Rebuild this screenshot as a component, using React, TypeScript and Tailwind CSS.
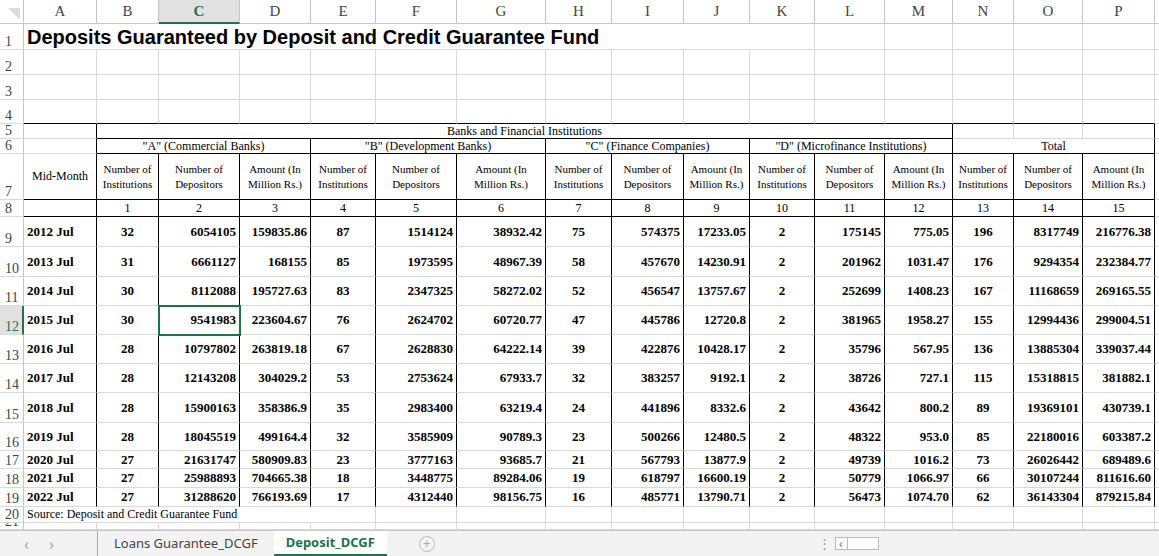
import React from "react";

type C = {
  t?: string;
  span?: number;
  r?: boolean; // black right border
  b?: boolean; // black bottom border
  al?: "l" | "c" | "r";
  bold?: boolean;
  sm?: boolean;
  noR?: boolean;
  sel?: boolean;
};

const cols = "grid-cols-[24px_73px_62px_81px_71px_65px_81px_89px_66px_72px_66px_65px_70px_68px_61px_69px_72px_4px]";
const rows =
  "grid-rows-[24px_26px_25px_25px_24px_15px_15px_46px_17px_30px_30px_29px_29px_29px_29px_30px_28px_18px_19px_19px_16px_7px]";

const data: string[][] = [
  ["2012 Jul", "32", "6054105", "159835.86", "87", "1514124", "38932.42", "75", "574375", "17233.05", "2", "175145", "775.05", "196", "8317749", "216776.38"],
  ["2013 Jul", "31", "6661127", "168155", "85", "1973595", "48967.39", "58", "457670", "14230.91", "2", "201962", "1031.47", "176", "9294354", "232384.77"],
  ["2014 Jul", "30", "8112088", "195727.63", "83", "2347325", "58272.02", "52", "456547", "13757.67", "2", "252699", "1408.23", "167", "11168659", "269165.55"],
  ["2015 Jul", "30", "9541983", "223604.67", "76", "2624702", "60720.77", "47", "445786", "12720.8", "2", "381965", "1958.27", "155", "12994436", "299004.51"],
  ["2016 Jul", "28", "10797802", "263819.18", "67", "2628830", "64222.14", "39", "422876", "10428.17", "2", "35796", "567.95", "136", "13885304", "339037.44"],
  ["2017 Jul", "28", "12143208", "304029.2", "53", "2753624", "67933.7", "32", "383257", "9192.1", "2", "38726", "727.1", "115", "15318815", "381882.1"],
  ["2018 Jul", "28", "15900163", "358386.9", "35", "2983400", "63219.4", "24", "441896", "8332.6", "2", "43642", "800.2", "89", "19369101", "430739.1"],
  ["2019 Jul", "28", "18045519", "499164.4", "32", "3585909", "90789.3", "23", "500266", "12480.5", "2", "48322", "953.0", "85", "22180016", "603387.2"],
  ["2020 Jul", "27", "21631747", "580909.83", "23", "3777163", "93685.7", "21", "567793", "13877.9", "2", "49739", "1016.2", "73", "26026442", "689489.6"],
  ["2021 Jul", "27", "25988893", "704665.38", "18", "3448775", "89284.06", "19", "618797", "16600.19", "2", "50779", "1066.97", "66", "30107244", "811616.60"],
  ["2022 Jul", "27", "31288620", "766193.69", "17", "4312440", "98156.75", "16", "485771", "13790.71", "2", "56473", "1074.70", "62", "36143304", "879215.84"],
];

const colAlign: ("l" | "c" | "r")[] = ["l", "c", "r", "r", "c", "r", "r", "c", "r", "r", "c", "r", "r", "c", "r", "r"];
const letters = "ABCDEFGHIJKLMNOP".split("");
const blank = (n: number, o: Partial<C> = {}): C[] => Array.from({ length: n }, () => ({ ...o }));

const hdrs = ["Number of Institutions", "Number of Depositors", "Amount (In Million Rs.)"];

function buildRows(): C[][] {
  const out: C[][] = [];
  out.push([{ t: "Deposits Guaranteed by Deposit and Credit Guarantee Fund", span: 10, al: "l", noR: true }, ...blank(6)]);
  out.push(blank(16));
  out.push(blank(16));
  out.push(blank(16, { b: true }));
  out.push([
    { r: true },
    { t: "Banks and Financial Institutions", span: 12, r: true, b: true, al: "c", sm: true },
    {},
    {},
    { r: true },
  ]);
  out.push([
    { r: true },
    { t: '"A" (Commercial Banks)', span: 3, r: true, b: true, al: "c", sm: true },
    { t: '"B" (Development Banks)', span: 3, r: true, b: true, al: "c", sm: true },
    { t: '"C" (Finance Companies)', span: 3, r: true, b: true, al: "c", sm: true },
    { t: '"D" (Microfinance Institutions)', span: 3, r: true, b: true, al: "c", sm: true },
    { t: "Total", span: 3, r: true, b: true, al: "c", sm: true },
  ]);
  out.push([
    { t: "Mid-Month", r: true, b: true, al: "c", sm: true },
    ...Array.from({ length: 15 }, (_, i) => ({ t: hdrs[i % 3], r: true, b: true, al: "c" as const, sm: true })),
  ]);
  out.push([{ r: true, b: true }, ...Array.from({ length: 15 }, (_, i) => ({ t: String(i + 1), r: true, b: true, al: "c" as const, sm: true }))]);
  data.forEach((row, ri) => {
    out.push(row.map((t, i) => ({ t, r: true, al: colAlign[i], bold: true, sel: ri === 3 && i === 2 })));
  });
  out.push([{ t: "Source: Deposit and Credit Guarantee Fund", span: 4, al: "l", sm: true, noR: true }, ...blank(12)]);
  out.push(blank(16));
  return out;
}

function Cell({ c }: { c: C }) {
  const align = c.al === "c" ? "justify-center text-center" : c.al === "r" ? "justify-end text-right" : "justify-start text-left";
  const size = c.bold ? "text-[13px] font-bold" : c.sm ? "text-[12px] leading-[15px]" : "text-[12px]";
  return (
    <div
      style={{ gridColumn: c.span ? `span ${c.span} / span ${c.span}` : undefined }}
      className={`relative flex items-center overflow-visible whitespace-nowrap px-[3px] ${align} ${size} ${
        c.noR ? "" : c.r ? "border-r border-r-black" : "border-r border-r-[#d9d9d9]"
      } ${c.b ? "border-b border-b-black" : "border-b border-b-[#d9d9d9]"} ${
        c.sel ? "outline-2 outline-[#217346] -outline-offset-1 z-10" : ""
      }`}
    >
      {c.t && c.t.startsWith("Deposits") ? (
        <span className="font-[family-name:Liberation_Sans,Arial,sans-serif] text-[20px] font-bold text-black">{c.t}</span>
      ) : c.t && hdrs.includes(c.t) ? (
        <span className="text-[11px] leading-[15px] text-center">
          {c.t.split(" ").slice(0, 2).join(" ")}
          <br />
          {c.t.split(" ").slice(2).join(" ")}
        </span>
      ) : (
        c.t
      )}
    </div>
  );
}

export default function App() {
  const all = buildRows();
  return (
    <div className="h-[556px] w-[1159px] overflow-hidden bg-white font-[family-name:Liberation_Serif,Times_New_Roman,serif] text-black">
      <div className={`grid ${cols} ${rows} h-[530px]`}>
        {/* column header row */}
        <div className="relative border-b border-r border-[#c6c6c6] bg-white">
          <div className="absolute bottom-[3px] right-[3px] h-0 w-0 border-l-[12px] border-t-[12px] border-l-transparent border-t-[#dcdcdc]" />
        </div>
        {letters.map((l) => (
          <div
            key={l}
            className={`flex items-center justify-center text-[15px] ${
              l === "C"
                ? "border-b-2 border-b-[#217346] border-r border-r-[#c6c6c6] bg-[#e1e1e1] font-bold text-[#217346]"
                : "border-b border-r border-[#c6c6c6] text-[#444]"
            }`}
          >
            {l}
          </div>
        ))}
        <div className="border-b border-[#c6c6c6]" />
        {all.map((row, ri) => (
          <React.Fragment key={ri}>
            <div
              className={`flex items-end overflow-hidden pl-[5px] text-[14px] leading-[14px] ${
                ri === 11
                  ? "border-r-2 border-r-[#217346] bg-[#e1e1e1] text-[#217346]"
                  : "border-r border-r-[#c6c6c6] text-[#444]"
              } border-b border-b-[#d9d9d9]`}
            >
              {ri + 1}
            </div>
            {row.map((c, ci) => (
              <Cell key={ci} c={c} />
            ))}
            <div className="border-b border-b-[#d9d9d9]" />
          </React.Fragment>
        ))}
      </div>
      <div className="flex h-[26px] items-stretch border-t border-[#c6c6c6] bg-[#f3f3f3] font-[family-name:Noto_Sans,sans-serif] text-[13px] text-[#444]">
        <div className="flex w-[97px] items-center gap-[20px] pl-[24px] text-[16px] text-[#aaa]">
          <span>‹</span>
          <span>›</span>
        </div>
        <div className="flex items-center border-l border-[#aaa] px-[16px]">Loans Guarantee_DCGF</div>
        <div className="flex items-center border-b-2 border-[#217346] bg-white px-[12px] font-bold text-[#217346]">
          Deposit_DCGF
        </div>
        <div className="flex w-[80px] items-center justify-center">
          <span className="flex h-[16px] w-[16px] items-center justify-center rounded-full border border-[#bbb] text-[13px] leading-none text-[#aaa]">
            +
          </span>
        </div>
        <div className="flex-1" />
        <div className="flex items-center pr-[4px] text-[#999]">⋮</div>
        <div className="my-[6px] mr-[280px] flex w-[44px] items-center border border-[#bbb] bg-white">
          <span className="ml-[3px] text-[12px] leading-none text-[#777]">‹</span>
          <span className="ml-[4px] h-full w-[1px] bg-[#bbb]" />
        </div>
      </div>
    </div>
  );
}
